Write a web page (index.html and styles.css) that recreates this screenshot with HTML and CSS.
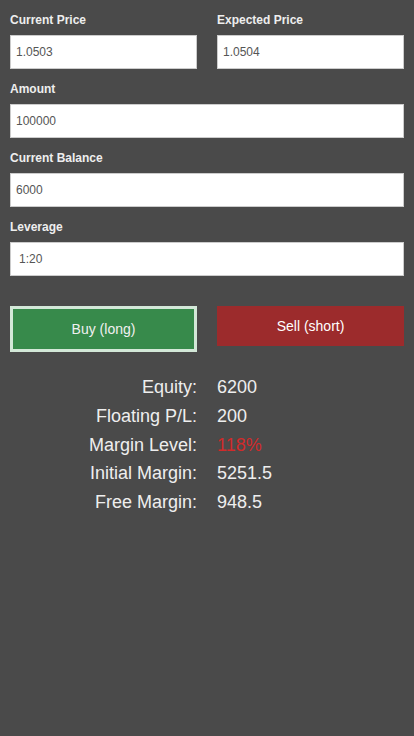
FILE: index.html
```html
<!DOCTYPE html>
<html>
<head>
<meta charset="utf-8">
<link rel="stylesheet" href="styles.css">
</head>
<body>
<div class="calc">
  <div class="row two">
    <div class="field">
      <label class="label">Current Price</label>
      <input class="input" type="text" value="1.0503">
    </div>
    <div class="field">
      <label class="label">Expected Price</label>
      <input class="input" type="text" value="1.0504">
    </div>
  </div>
  <div class="field">
    <label class="label">Amount</label>
    <input class="input" type="text" value="100000">
  </div>
  <div class="field">
    <label class="label">Current Balance</label>
    <input class="input" type="text" value="6000">
  </div>
  <div class="field">
    <label class="label">Leverage</label>
    <div class="input select">1:20</div>
  </div>
  <div class="row two buttons">
    <button class="btn buy">Buy (long)</button>
    <button class="btn sell">Sell (short)</button>
  </div>
  <div class="stats">
    <div class="k">Equity:</div><div class="v">6200</div>
    <div class="k">Floating P/L:</div><div class="v">200</div>
    <div class="k">Margin Level:</div><div class="v red">118%</div>
    <div class="k">Initial Margin:</div><div class="v">5251.5</div>
    <div class="k">Free Margin:</div><div class="v">948.5</div>
  </div>
</div>
</body>
</html>
```
FILE: styles.css
```css
html, body {
  margin: 0;
  padding: 0;
  background: #4a4a4a;
  height: 100%;
}
body {
  font-family: "Liberation Sans", Arial, sans-serif;
  color: #eeeeee;
}
.calc {
  padding: 13px 10px 0 10px;
}
.two {
  display: grid;
  grid-template-columns: 1fr 1fr;
  column-gap: 20px;
}
.field {
  display: flex;
  flex-direction: column;
  margin-bottom: 13px;
}
.label {
  font-size: 12px;
  font-weight: bold;
  line-height: 14px;
  margin-bottom: 8px;
  color: #eeeeee;
}
.input {
  box-sizing: border-box;
  height: 34px;
  width: 100%;
  border: 1px solid #cccccc;
  background: #ffffff;
  font-family: "Liberation Sans", Arial, sans-serif;
  font-size: 12px;
  color: #555555;
  padding: 0 5px;
  margin: 0;
  outline: none;
}
.select {
  display: flex;
  align-items: center;
  padding-left: 8px;
}
.buttons {
  margin-top: 30px;
  align-items: start;
}
.btn {
  box-sizing: border-box;
  width: 100%;
  font-family: "Liberation Sans", Arial, sans-serif;
  font-size: 14px;
  color: #ffffff;
  border: 0;
  margin: 0;
  padding: 0;
  height: 40px;
  cursor: pointer;
}
.buy {
  background: #378a4b;
  border: 3px solid #d3e8d8;
  height: 46px;
  color: #f0f0f0;
}
.sell {
  background: #9c2b2c;
}
.stats {
  display: grid;
  grid-template-columns: 1fr 1fr;
  column-gap: 20px;
  margin-top: 21px;
  font-size: 18px;
  line-height: 28.8px;
}
.k {
  text-align: right;
}
.v {
  text-align: left;
}
.red {
  color: #d12a2a;
}
```
